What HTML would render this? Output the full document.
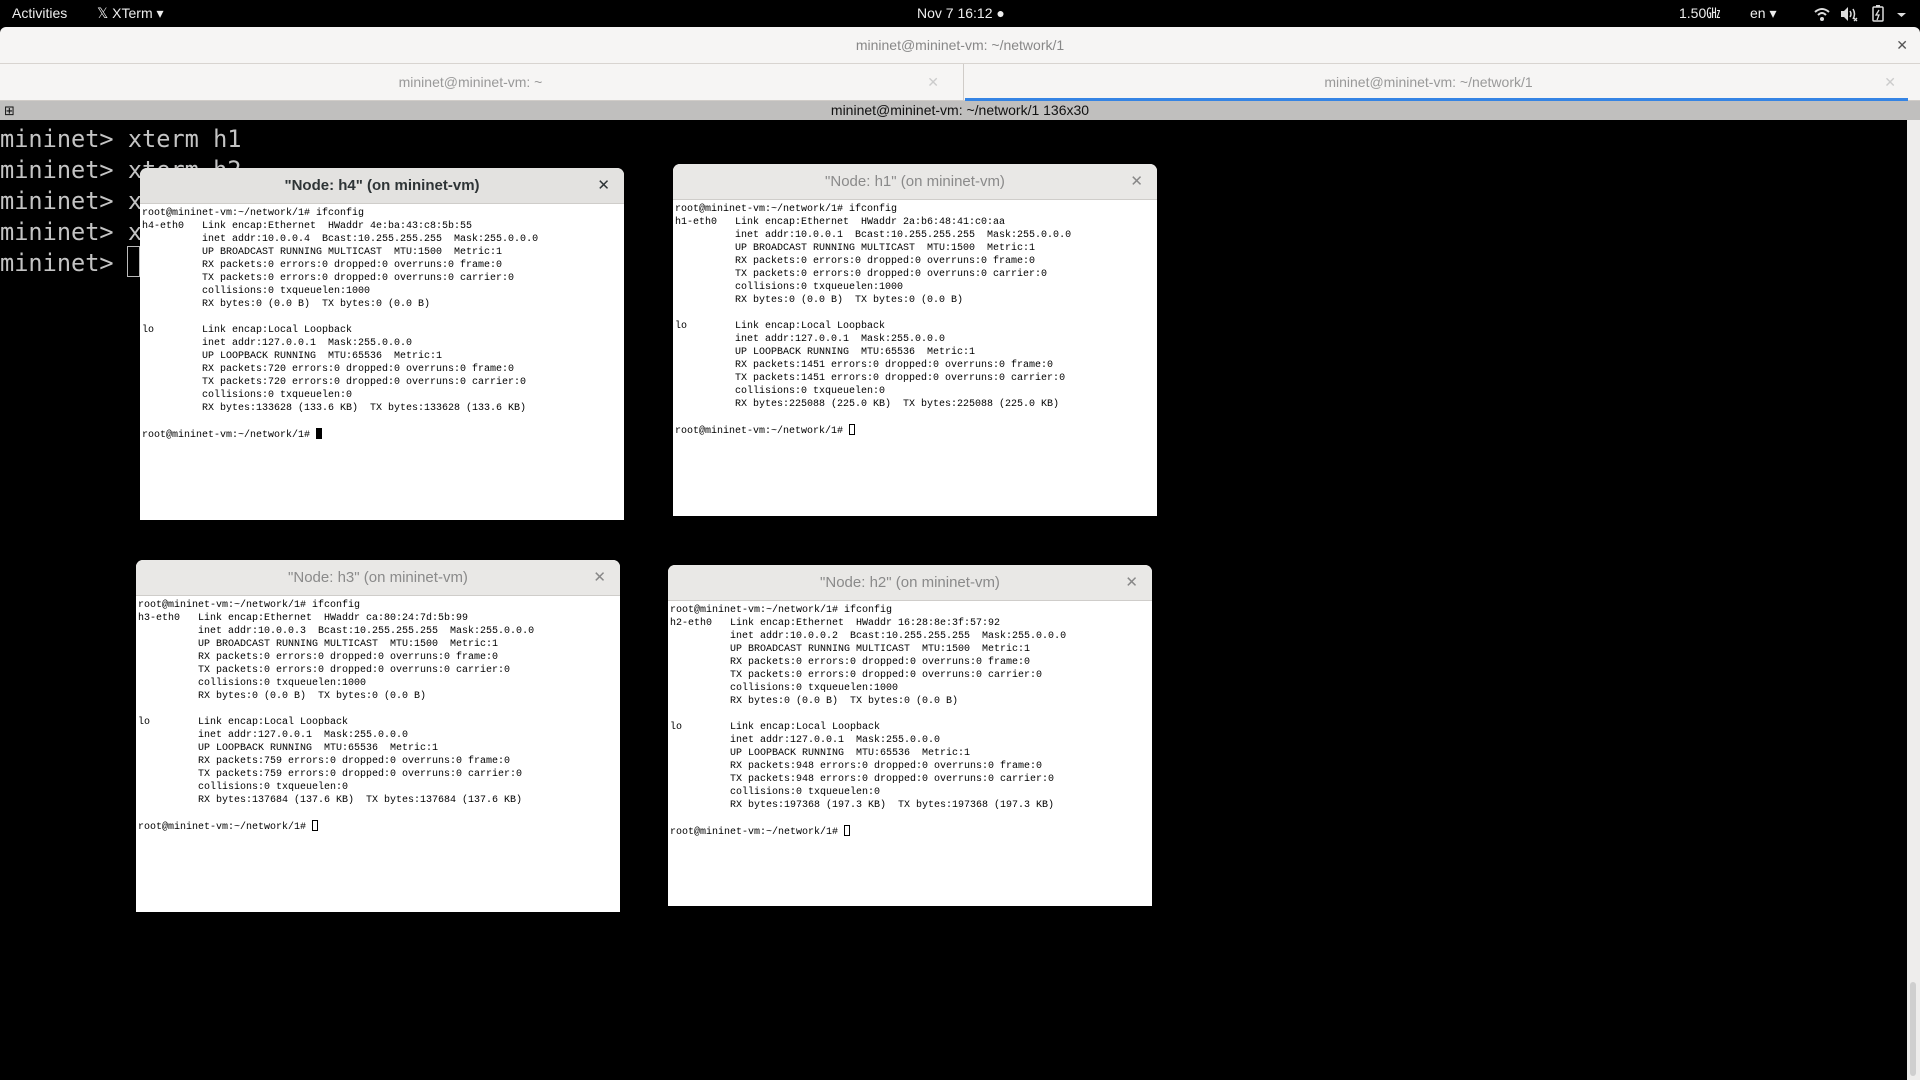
<!DOCTYPE html>
<html><head><meta charset="utf-8"><style>
*{margin:0;padding:0;box-sizing:border-box}
body{width:1920px;height:1080px;background:#000;overflow:hidden;position:relative;font-family:"Liberation Sans","DejaVu Sans",sans-serif}
.top{position:absolute;left:0;top:0;width:1920px;height:27px;background:#000;color:#eee;font-size:14px;line-height:27px}
.top span{position:absolute;top:0}
.gtitle{position:absolute;left:0;top:27px;width:1920px;height:37px;background:#f6f5f4;border-radius:6px 6px 0 0;border-bottom:1px solid #d8d4d0;text-align:center;line-height:37px;font-size:14px;color:#888}
.tabs{position:absolute;left:0;top:64px;width:1920px;height:37px;background:#f6f5f4;border-bottom:1px solid #d0ccc8}
.tab{position:absolute;top:0;height:37px;text-align:center;line-height:37px;font-size:14px;color:#999}
.status{position:absolute;left:0;top:101px;width:1920px;height:19px;background:#c0bfbe;text-align:center;font-size:14px;line-height:19px;color:#111}
.term{position:absolute;left:0;top:124px;font-family:"DejaVu Sans Mono",monospace;font-size:23.6px;line-height:31px;color:#c4c4c4;white-space:pre}
.sb{position:absolute;left:1907px;top:120px;width:13px;height:960px;background:#eeedec}
.win{position:absolute;background:#fff;border-radius:7px 7px 0 0;overflow:hidden}
.tb{height:36px;background:#e9e8e6;border-bottom:1px solid #cfcdca;text-align:center;line-height:36px;font-size:15px;color:#8a8a8a;position:relative}
.tb.f{color:#2e3436;font-weight:bold;background:#e3e2e0}
.tb i{position:absolute;right:14px;top:0;font-style:normal;font-size:15px;color:#888}
.tb.f i{color:#2e3436}
pre{font-family:"Liberation Mono","DejaVu Sans Mono",monospace;font-size:10px;line-height:13px;padding:3px 0 0 2px;color:#000;letter-spacing:0}
.cur{display:inline-block;width:6px;height:11px;vertical-align:-2px;background:#000}
.hc{display:inline-block;width:6px;height:11px;vertical-align:-2px;border:1px solid #000}
</style></head><body>
<div class="top">
<span style="left:12px">Activities</span>
<span style="left:97px">𝕏 XTerm ▾</span>
<span style="left:917px">Nov 7  16:12 ●</span>
<span style="left:1679px">1.50㎓</span>
<span style="left:1750px">en ▾</span>
<svg style="position:absolute;left:1812px;top:5px" width="100" height="18" viewBox="0 0 100 18">
<path d="M3 7 Q10 1 17 7" stroke="#ddd" stroke-width="2" fill="none"/><path d="M6 10 Q10 6 14 10" stroke="#ddd" stroke-width="2" fill="none"/><circle cx="10" cy="14" r="2" fill="#ddd"/>
<path d="M29 6h3l4-4v14l-4-4h-3z" fill="#ddd"/><path d="M38 6q2 3 0 6M41 4q3 5 0 10" stroke="#ddd" stroke-width="1.5" fill="none"/><path d="M42 13l3 3M45 13l-3 3" stroke="#ddd" stroke-width="1.3"/>
<rect x="61" y="2" width="10" height="14" rx="1" stroke="#ddd" stroke-width="1.5" fill="none"/><rect x="64" y="0" width="4" height="2" fill="#ddd"/><path d="M67 5l-3 5h3l-2 5" stroke="#ddd" stroke-width="1.3" fill="none"/>
<path d="M85 8h9l-4.5 4z" fill="#ddd"/></svg>
</div>
<div class="gtitle">mininet@mininet-vm: ~/network/1<span style="position:absolute;right:12px;color:#555">✕</span></div>
<div class="tabs">
<div class="tab" style="left:0;width:964px;border-right:1px solid #d0ccc8;padding-right:22px">mininet@mininet-vm: ~<span style="position:absolute;right:24px;color:#ccc">✕</span></div>
<div class="tab" style="left:965px;width:943px;border-bottom:3px solid #3584e4;padding-right:16px">mininet@mininet-vm: ~/network/1<span style="position:absolute;right:12px;color:#ccc">✕</span></div>
</div>
<div class="status"><span style="position:absolute;left:4px;top:0;font-size:13px">⊞</span>mininet@mininet-vm: ~/network/1 136x30</div>
<div class="term">mininet&gt; xterm h1
mininet&gt; xterm h2
mininet&gt; xterm h3
mininet&gt; xterm h4
mininet&gt; </div>
<div style="position:absolute;left:127px;top:246px;width:13px;height:31px;border:1px solid #bbb"></div>
<div class="sb"><div style="position:absolute;left:3px;top:862px;width:6px;height:94px;background:#cfcfcf;border-radius:3px"></div></div>

<div class="win" style="left:673px;top:164px;width:484px;height:352px">
<div class="tb">"Node: h1" (on mininet-vm)<i>✕</i></div>
<pre>root@mininet-vm:~/network/1# ifconfig
h1-eth0   Link encap:Ethernet  HWaddr 2a:b6:48:41:c0:aa
          inet addr:10.0.0.1  Bcast:10.255.255.255  Mask:255.0.0.0
          UP BROADCAST RUNNING MULTICAST  MTU:1500  Metric:1
          RX packets:0 errors:0 dropped:0 overruns:0 frame:0
          TX packets:0 errors:0 dropped:0 overruns:0 carrier:0
          collisions:0 txqueuelen:1000
          RX bytes:0 (0.0 B)  TX bytes:0 (0.0 B)

lo        Link encap:Local Loopback
          inet addr:127.0.0.1  Mask:255.0.0.0
          UP LOOPBACK RUNNING  MTU:65536  Metric:1
          RX packets:1451 errors:0 dropped:0 overruns:0 frame:0
          TX packets:1451 errors:0 dropped:0 overruns:0 carrier:0
          collisions:0 txqueuelen:0
          RX bytes:225088 (225.0 KB)  TX bytes:225088 (225.0 KB)

root@mininet-vm:~/network/1# <span class="hc"></span></pre></div>

<div class="win" style="left:140px;top:168px;width:484px;height:352px">
<div class="tb f">"Node: h4" (on mininet-vm)<i>✕</i></div>
<pre>root@mininet-vm:~/network/1# ifconfig
h4-eth0   Link encap:Ethernet  HWaddr 4e:ba:43:c8:5b:55
          inet addr:10.0.0.4  Bcast:10.255.255.255  Mask:255.0.0.0
          UP BROADCAST RUNNING MULTICAST  MTU:1500  Metric:1
          RX packets:0 errors:0 dropped:0 overruns:0 frame:0
          TX packets:0 errors:0 dropped:0 overruns:0 carrier:0
          collisions:0 txqueuelen:1000
          RX bytes:0 (0.0 B)  TX bytes:0 (0.0 B)

lo        Link encap:Local Loopback
          inet addr:127.0.0.1  Mask:255.0.0.0
          UP LOOPBACK RUNNING  MTU:65536  Metric:1
          RX packets:720 errors:0 dropped:0 overruns:0 frame:0
          TX packets:720 errors:0 dropped:0 overruns:0 carrier:0
          collisions:0 txqueuelen:0
          RX bytes:133628 (133.6 KB)  TX bytes:133628 (133.6 KB)

root@mininet-vm:~/network/1# <span class="cur"></span></pre></div>

<div class="win" style="left:136px;top:560px;width:484px;height:352px">
<div class="tb">"Node: h3" (on mininet-vm)<i>✕</i></div>
<pre>root@mininet-vm:~/network/1# ifconfig
h3-eth0   Link encap:Ethernet  HWaddr ca:80:24:7d:5b:99
          inet addr:10.0.0.3  Bcast:10.255.255.255  Mask:255.0.0.0
          UP BROADCAST RUNNING MULTICAST  MTU:1500  Metric:1
          RX packets:0 errors:0 dropped:0 overruns:0 frame:0
          TX packets:0 errors:0 dropped:0 overruns:0 carrier:0
          collisions:0 txqueuelen:1000
          RX bytes:0 (0.0 B)  TX bytes:0 (0.0 B)

lo        Link encap:Local Loopback
          inet addr:127.0.0.1  Mask:255.0.0.0
          UP LOOPBACK RUNNING  MTU:65536  Metric:1
          RX packets:759 errors:0 dropped:0 overruns:0 frame:0
          TX packets:759 errors:0 dropped:0 overruns:0 carrier:0
          collisions:0 txqueuelen:0
          RX bytes:137684 (137.6 KB)  TX bytes:137684 (137.6 KB)

root@mininet-vm:~/network/1# <span class="hc"></span></pre></div>

<div class="win" style="left:668px;top:565px;width:484px;height:341px">
<div class="tb">"Node: h2" (on mininet-vm)<i>✕</i></div>
<pre>root@mininet-vm:~/network/1# ifconfig
h2-eth0   Link encap:Ethernet  HWaddr 16:28:8e:3f:57:92
          inet addr:10.0.0.2  Bcast:10.255.255.255  Mask:255.0.0.0
          UP BROADCAST RUNNING MULTICAST  MTU:1500  Metric:1
          RX packets:0 errors:0 dropped:0 overruns:0 frame:0
          TX packets:0 errors:0 dropped:0 overruns:0 carrier:0
          collisions:0 txqueuelen:1000
          RX bytes:0 (0.0 B)  TX bytes:0 (0.0 B)

lo        Link encap:Local Loopback
          inet addr:127.0.0.1  Mask:255.0.0.0
          UP LOOPBACK RUNNING  MTU:65536  Metric:1
          RX packets:948 errors:0 dropped:0 overruns:0 frame:0
          TX packets:948 errors:0 dropped:0 overruns:0 carrier:0
          collisions:0 txqueuelen:0
          RX bytes:197368 (197.3 KB)  TX bytes:197368 (197.3 KB)

root@mininet-vm:~/network/1# <span class="hc"></span></pre></div>
</body></html>
